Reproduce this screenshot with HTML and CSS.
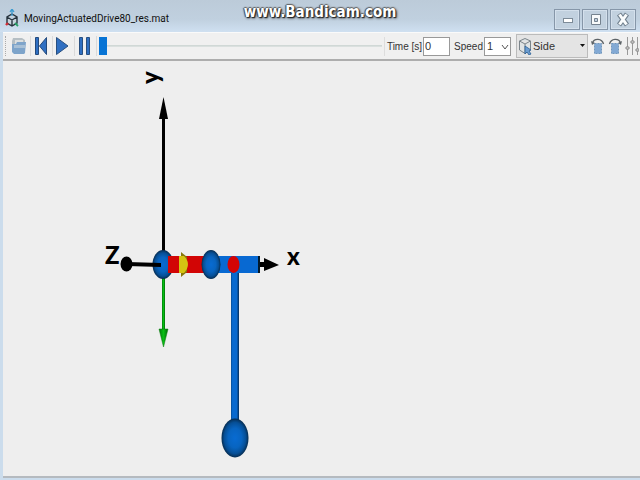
FILE: index.html
```
<!DOCTYPE html>
<html lang="en">
<head>
<meta charset="utf-8">
<meta name="viewport" content="width=device-width, initial-scale=1">
<title>MovingActuatedDrive80_res.mat</title>
<link rel="stylesheet" href="styles.css">
</head>
<body>
<div class="window">
  <header class="titlebar">
    <svg class="app-icon" viewBox="0 0 14 20" aria-hidden="true">
      <path d="M7 5 12 8V14L7 17 2 14V8ZM2 8 7 11 12 8M7 11V17" fill="#c8d4dd" stroke="#26323c" stroke-width="1.4"/>
      <path d="M7 7V1M5 3 7 0 9 3" fill="none" stroke="#3c9bd0" stroke-width="1.3"/>
      <path d="M3 14 1 16" stroke="#d22c34" stroke-width="2.4"/>
      <path d="M10 14 13 17" stroke="#27a065" stroke-width="1.8"/>
    </svg>
    <h1 class="title">MovingActuatedDrive80_res.mat</h1>
    <span class="watermark">www.Bandicam.com</span>
    <div class="window-buttons">
      <button class="window-button" aria-label="Minimize"><svg viewBox="0 0 24 20"><rect x="8.500" y="8.500" width="9" height="4" fill="#fff" stroke="#7d8b98"/></svg></button>
      <button class="window-button" aria-label="Maximize"><svg viewBox="0 0 24 20"><path d="M8.500 4.500h9v10h-9zM11.500 8.500h3v3h-3z" fill="#f8fafb" fill-rule="evenodd" stroke="#75828f"/></svg></button>
      <button class="window-button" aria-label="Close"><svg viewBox="0 0 24 20"><path d="M8 4 16 15M16 4 8 15" stroke="#71808e" stroke-width="5"/><path d="M8.500 4.500 15.500 14.500M15.500 4.500 8.500 14.500" stroke="#fafcfd" stroke-width="3"/></svg></button>
    </div>
  </header>
  <div class="toolbar" role="toolbar" aria-label="Playback">
    <button class="tool main-tool" aria-label="Open"><svg viewBox="0 0 16 20">
      <path d="M2 2H11L14 4V11H1V5Z" fill="#b6bfc4"/><path d="M4 4H12V9H4Z" fill="#dcdfdf"/>
      <path d="M1 8H5L6 6H15L14 17L13 18H3L1 16Z" fill="#7ea4ca"/><path d="M3 9H14V12H3Z" fill="#a8c0d6"/></svg></button>
    <button class="tool main-tool" aria-label="Rewind"><svg viewBox="0 0 16 20"><path d="M2.500 1.500h3v17h-3zM13.500 1.500v17l-7-8.500z" fill="#2f6fc2" stroke="#244a7c"/></svg></button>
    <button class="tool main-tool" aria-label="Play"><svg viewBox="0 0 16 20"><path d="M1.500 1.500 13 10 1.500 18.500Z" fill="#2f6fc2" stroke="#284f80"/></svg></button>
    <button class="tool main-tool" aria-label="Pause"><svg viewBox="0 0 16 20"><path d="M2.500 1.500h3v17h-3zM9.500 1.500h3v17h-3z" fill="#2f6fc2" stroke="#284f80"/></svg></button>
    <input class="timeline" type="range" min="0" max="100" value="0" aria-label="Time position">
    <div class="field">
      <label for="time">Time [s]</label>
      <input id="time" class="time" type="text" value="0">
    </div>
    <div class="field speed-field">
      <label for="speed">Speed</label>
      <span class="select-box"><select id="speed" class="speed"><option>1</option></select>
      <svg class="chevron" viewBox="0 0 8 6" aria-hidden="true"><path d="M1 1 4 5 7 1" fill="none" stroke="#555"/></svg></span>
    </div>
    <div class="view-box">
      <svg class="cube" viewBox="0 0 14 18" aria-hidden="true"><path d="M7 1.500 12.500 4V13L7 16.500 1.500 13V4ZM1.500 4 7 7 12.500 4M7 7V16.500" fill="#dfe3e4" stroke="#7b848a"/><path d="M7 9 13 13 11 14 13 17 11 18 9 15 7 17Z" fill="#6d9ed2" stroke="#2c5f94" stroke-width=".8"/></svg>
      <select class="view" aria-label="View"><option>Side</option></select>
      <svg class="drop" viewBox="0 0 6 4" aria-hidden="true"><path d="M0 0H5L2.500 3Z" fill="#111"/></svg>
    </div>
    <button class="tool small" aria-label="Rotate left"><svg viewBox="0 0 14 18"><path d="M3.500 6.500h7v10h-7z" fill="#82a9d4" stroke="#7097bd" stroke-dasharray="2 1"/><path d="M1.500 6C3 1 11 1 12.500 7" fill="none" stroke="#5c6266" stroke-width="1.400"/><path d="M0 4 1 8 4 6" fill="#5c6266"/></svg></button>
    <button class="tool small" aria-label="Rotate right"><svg viewBox="0 0 14 18"><path d="M3.500 6.500h7v10h-7z" fill="#82a9d4" stroke="#7097bd" stroke-dasharray="2 1"/><path d="M1.500 7C3 1 11 1 12.500 6" fill="none" stroke="#5c6266" stroke-width="1.400"/><path d="M14 4 13 8 10 6" fill="#5c6266"/></svg></button>
    <button class="tool small" aria-label="Settings"><svg viewBox="0 0 14 18"><path d="M2.500 0V18M7.500 0V18M12.500 0V18" stroke="#999"/><path d="M1 10h3v2H1zM6 4h3v2H6zM11 12h3v2h-3z" fill="#eee" stroke="#888"/></svg></button>
  </div>
  <main class="viewport">
    <svg class="scene" viewBox="3 61 637 415" preserveAspectRatio="xMinYMin meet" role="img" aria-label="Side view of the mechanism">
      <defs>
        <radialGradient id="ball"><stop offset="0" stop-color="#086bd2"/><stop offset=".5" stop-color="#0864c0"/><stop offset=".8" stop-color="#064f96"/><stop offset="1" stop-color="#062c50"/></radialGradient>
        <linearGradient id="rod"><stop offset="0" stop-color="#074b90"/><stop offset=".2" stop-color="#0869cf"/><stop offset=".7" stop-color="#0869cf"/><stop offset="1" stop-color="#052c58"/></linearGradient>
        <linearGradient id="green"><stop offset="0" stop-color="#007c08"/><stop offset=".5" stop-color="#08bd14"/><stop offset="1" stop-color="#006905"/></linearGradient>
      </defs>
      <path d="M163.500 97 168 119H159Z"/>
      <path d="M162 118h3v135h-3z"/>
      <path d="M162 278h3v53h-3z" fill="url(#green)"/>
      <path d="M159 329h9L163.500 347Z" fill="url(#green)" stroke="#087b0d" stroke-width=".5"/>
      <path d="M231 268h8v154h-8z" fill="url(#rod)"/>
      <ellipse cx="235" cy="438" rx="13.500" ry="19.500" fill="url(#ball)"/>
      <path d="M259 262h6v5h-6zM264 258 279 265 264 271Z"/>
      <ellipse cx="163" cy="264.500" rx="10.500" ry="14.500" fill="url(#ball)"/>
      <path d="M168 256H205V273H168Z" fill="#d20505"/>
      <path d="M168 256 170 261V268L168 273Z" fill="#6b1221"/>
      <path d="M181 252 187 257V272L181 277Z" fill="#87780b"/>
      <path d="M179 256H184Q192 264 184 273H179Z" fill="#d5c312"/>
      <path d="M168 256H179V273H168Z" fill="#d20505"/>
      <path d="M217 256H259V273H217Z" fill="#0869d2"/>
      <path d="M258 256h2v17h-2z" fill="#03192b"/>
      <ellipse cx="211" cy="264.500" rx="9.500" ry="14.500" fill="url(#ball)"/>
      <ellipse cx="233.500" cy="264.500" rx="6" ry="8.500" fill="#d40404"/>
      <path d="M127 262 161 263V267L127 266Z"/>
      <ellipse cx="126.500" cy="264" rx="6" ry="7.500"/>
      <text class="axis" x="287" y="265">x</text>
      <text class="axis" x="105" y="264">Z</text>
      <text class="axis" transform="translate(159 84) rotate(-90)">y</text>
    </svg>
  </main>
</div>
</body>
</html>
```
FILE: styles.css
```
* { box-sizing: border-box; }
body { margin: 0; font-family: "Liberation Sans", sans-serif; font-size: 10px; color: #333; }
button, input, select { font: inherit; color: inherit; margin: 0; padding: 0; border: 0; border-radius: 0; background: none; }
svg { display: block; }

.window { display: flex; flex-direction: column; min-height: 100vh; padding: 0 0 2px 3px; background: #cbdcec; }

.titlebar { position: relative; display: flex; align-items: center; height: 32px; margin-left: -3px; padding: 6px 4px 0 5px; gap: 5px; background: linear-gradient(#bccbd9, #c0d0df 60%, #cfe0f1); }
.app-icon { width: 14px; height: 20px; }
.title { flex: 1; margin: 0; font-family: Roboto, sans-serif; font-size: 10px; font-weight: 400; line-height: 16px; color: #111; }
.watermark { position: absolute; top: 3px; left: 50%; transform: translateX(-50%); font: 700 15px/18px "DejaVu Sans Condensed", "DejaVu Sans", sans-serif; color: #fff; text-shadow: 1px 1px 1px #222, -1px 0 1px #444, 0 -1px 1px #666, 1px 1px 3px #222; }
.window-buttons { display: flex; gap: 2px; }
.window-button { width: 26px; height: 21px; border: 1px solid #8696a8; background: #c2d1df; box-shadow: inset 0 0 0 1px #d4e0ec; }
.window-button svg { width: 24px; height: 20px; }

.toolbar { display: flex; align-items: center; height: 29px; padding: 0 1px 0 2px; background: #f0f0f0; border-top: 1px solid #fafafa; border-bottom: 2px solid #adadad; }
.toolbar::before { content: ""; align-self: stretch; margin: 3px 5px 3px 0; border-left: 1px dotted #aaa; }
.tool { flex: none; width: 16px; height: 20px; }
.tool svg { width: 100%; height: 100%; }
.tool.main-tool { display: flex; width: 22px; padding-right: 6px; background: linear-gradient(#dadada, #dadada) 19px 0 / 1px 100% no-repeat; }
.tool.small { width: 14px; height: 18px; margin-left: 3px; }

.timeline { appearance: none; flex: 1; min-width: 60px; height: 18px; }
.timeline::-webkit-slider-runnable-track { height: 18px; background: linear-gradient(transparent 8px, #cbd4d2 8px, #dfe4e3 10px, transparent 10px); }
.timeline::-webkit-slider-thumb { appearance: none; width: 8px; height: 18px; background: #0874d5; }

.field { display: flex; align-items: center; gap: 1px; margin-left: 2px; padding-left: 2px; border-left: 1px solid #ddd; white-space: nowrap; }
.time { width: 27px; height: 19px; padding: 0 1px; background: #fff; border: 1px solid #999; }
.speed-field { border: 0; }
.select-box { position: relative; }
.speed { appearance: none; display: block; width: 27px; height: 19px; padding: 0 2px; background: #fff; border: 1px solid #999; }
.chevron { position: absolute; right: 2px; top: 7px; width: 8px; height: 6px; pointer-events: none; }
.view-box { position: relative; display: flex; align-items: center; width: 72px; height: 24px; margin-left: 5px; background: #e4e4e4; border: 1px solid #bbb; }
.cube { position: absolute; left: 1px; width: 14px; height: 18px; pointer-events: none; }
.view { appearance: none; width: 100%; height: 100%; padding-left: 16px; }
.drop { position: absolute; right: 1px; width: 6px; height: 4px; pointer-events: none; }

.time, .speed, .view { font-size: 11px; }

.viewport { flex: 1; background: #eee; border-bottom: 2px solid #b5babf; }
.scene { width: 100%; height: auto; }
.axis { font: 900 24px Lato, sans-serif; fill: #000; }
```
